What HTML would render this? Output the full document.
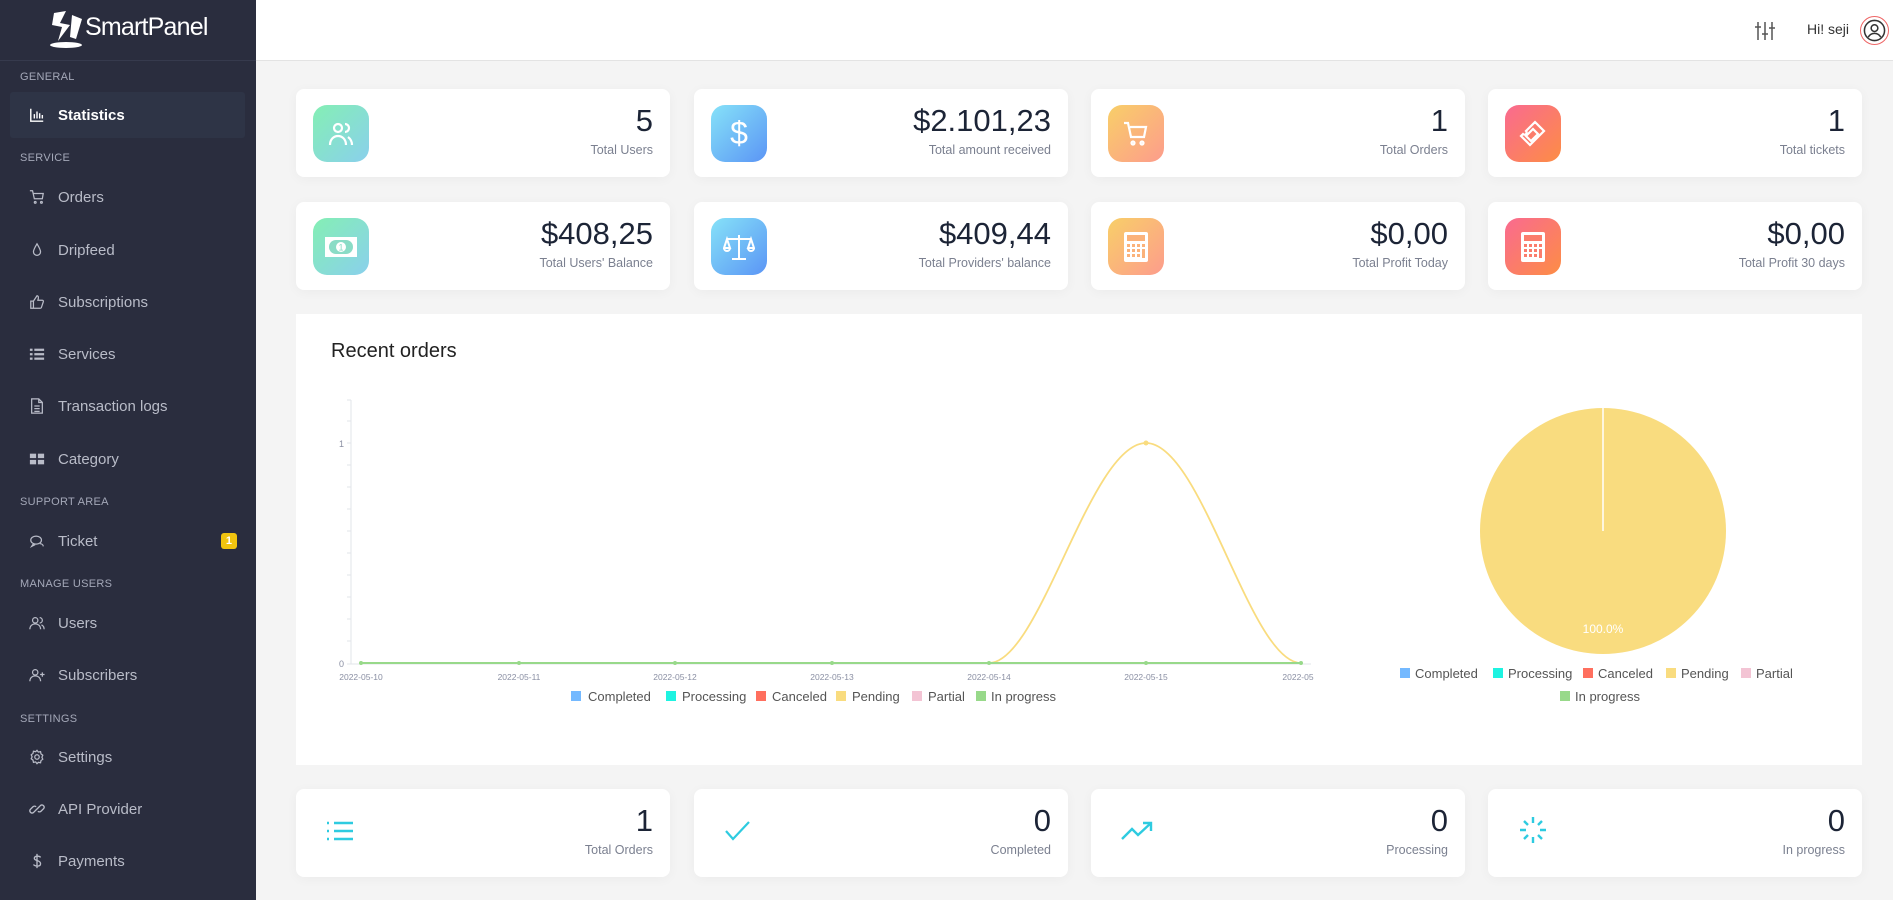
<!DOCTYPE html>
<html><head><meta charset="utf-8"><style>
*{box-sizing:border-box;margin:0;padding:0}
body{width:1893px;height:900px;overflow:hidden;background:#f4f4f4;font-family:"Liberation Sans",sans-serif;position:relative}
.sb{position:absolute;left:0;top:0;width:256px;height:900px;background:#2a2d3e}
.logo{position:absolute;left:0;top:0;width:256px;height:61px;border-bottom:1px solid #363a4d}
.sec{position:absolute;left:20px;font-size:11px;color:#a4a8b8;letter-spacing:.3px}
.it{position:absolute;left:10px;width:235px;height:46px;display:flex;align-items:center;padding-left:19px;color:#b9bcc8;font-size:15px}
.it svg{width:16px;height:16px;margin-right:13px;flex:none}
.it.act{background:#2e3446;color:#fff;font-weight:bold;border-radius:3px}
.hd{position:absolute;left:256px;top:0;width:1637px;height:61px;background:#fff;border-bottom:1px solid #e3e3e3}
.card{position:absolute;background:#fff;border-radius:8px;box-shadow:0 2px 12px rgba(0,0,0,.04)}
.ic{position:absolute;left:17px;top:16px;width:56px;height:57px;border-radius:14px;display:flex;align-items:center;justify-content:center}
.num{position:absolute;right:17px;top:14px;font-size:31px;color:#1c2436}
.lab{position:absolute;right:17px;top:54px;font-size:12.5px;color:#7b8090}
.g1{background:linear-gradient(135deg,#84efb4,#8ad0ec)}
.g2{background:linear-gradient(135deg,#86e2f8,#5b95f5)}
.g3{background:linear-gradient(135deg,#f8cf68,#fd9c8c)}
.g4{background:linear-gradient(135deg,#f96a90,#fd8d45)}
</style></head><body>
<div class="sb">
 <div class="logo">
  <svg style="position:absolute;left:46px;top:9px" width="42" height="40" viewBox="0 0 42 40"><path d="M8 4 L20 2 L14 14 L24 16 L12 32 L16 18 L6 16 Z" fill="#fff"/><path d="M26 6 L36 10 L30 30 L24 28 Z" fill="#fff"/><ellipse cx="20" cy="36" rx="16" ry="3" fill="#fff"/></svg>
  <div style="position:absolute;left:85px;top:13px;font-size:25px;color:#fff;letter-spacing:-0.8px">SmartPanel</div>
 </div>
 <div class="sec" style="top:71px">GENERAL</div>
 <div class="it act" style="top:92px"><svg viewBox="0 0 18 18" fill="none" stroke="#fff" stroke-width="1.6"><path d="M2 2v14h14M6 13V8M9 13V5M12 13V7M15 13V9"/></svg>Statistics</div>
 <div class="sec" style="top:152px">SERVICE</div>
 <div class="it" style="top:174px"><svg viewBox="0 0 18 18" fill="none" stroke="#b9bcc8" stroke-width="1.4"><path d="M1 2h3l2 9h9l1-6H5"/><circle cx="7" cy="15" r="1"/><circle cx="14" cy="15" r="1"/></svg>Orders</div>
 <div class="it" style="top:227px"><svg viewBox="0 0 18 18" fill="none" stroke="#b9bcc8" stroke-width="1.4"><path d="M9 2C6 7 5 9 5 11a4 4 0 008 0c0-2-1-4-4-9z"/></svg>Dripfeed</div>
 <div class="it" style="top:279px"><svg viewBox="0 0 18 18" fill="none" stroke="#b9bcc8" stroke-width="1.4"><path d="M2 8h3v8H2zM5 8l4-6c1 0 2 1 1.5 3L10 7h5c1 0 1.5 1 1 2l-2 6c0 .5-1 1-1.5 1H5"/></svg>Subscriptions</div>
 <div class="it" style="top:331px"><svg viewBox="0 0 18 18" fill="#b9bcc8"><rect x="1" y="3" width="3" height="2.5"/><rect x="6" y="3" width="11" height="2.5"/><rect x="1" y="8" width="3" height="2.5"/><rect x="6" y="8" width="11" height="2.5"/><rect x="1" y="13" width="3" height="2.5"/><rect x="6" y="13" width="11" height="2.5"/></svg>Services</div>
 <div class="it" style="top:383px"><svg viewBox="0 0 18 18" fill="none" stroke="#b9bcc8" stroke-width="1.4"><path d="M3 1h8l4 4v12H3zM11 1v4h4M6 9h6M6 12h6M6 15h6"/></svg>Transaction logs</div>
 <div class="it" style="top:436px"><svg viewBox="0 0 18 18" fill="#b9bcc8"><rect x="1" y="3" width="7" height="5"/><rect x="10" y="3" width="7" height="5"/><rect x="1" y="10" width="7" height="5"/><rect x="10" y="10" width="7" height="5"/></svg>Category</div>
 <div class="sec" style="top:496px">SUPPORT AREA</div>
 <div class="it" style="top:518px"><svg viewBox="0 0 18 18" fill="none" stroke="#b9bcc8" stroke-width="1.4"><ellipse cx="8" cy="8" rx="6" ry="4.5"/><path d="M5 12l-2 3 4-2M12 12c2 0 4 1 4 3"/></svg>Ticket<span style="position:absolute;right:8px;background:#f1c40f;color:#fff;font-size:11px;font-weight:bold;border-radius:3px;padding:2px 5px">1</span></div>
 <div class="sec" style="top:578px">MANAGE USERS</div>
 <div class="it" style="top:600px"><svg viewBox="0 0 18 18" fill="none" stroke="#b9bcc8" stroke-width="1.4"><circle cx="7" cy="6" r="3"/><path d="M1 16c0-4 3-6 6-6s6 2 6 6M12 3a3 3 0 010 6M14 11c2 1 3 3 3 5"/></svg>Users</div>
 <div class="it" style="top:652px"><svg viewBox="0 0 18 18" fill="none" stroke="#b9bcc8" stroke-width="1.4"><circle cx="7" cy="6" r="3"/><path d="M1 16c0-4 3-6 6-6s6 2 6 6M15 6v5M12.5 8.5h5"/></svg>Subscribers</div>
 <div class="sec" style="top:713px">SETTINGS</div>
 <div class="it" style="top:734px"><svg viewBox="0 0 18 18" fill="none" stroke="#b9bcc8" stroke-width="1.4"><circle cx="9" cy="9" r="2.5"/><path d="M9 1.5l1.5 2 2.5-.5.5 2.5 2 1.5-1 2.3 1 2.2-2 1.5-.5 2.5-2.5-.5L9 16.5 7.5 14.5l-2.5.5-.5-2.5-2-1.5 1-2.2-1-2.3 2-1.5.5-2.5 2.5.5z"/></svg>Settings</div>
 <div class="it" style="top:786px"><svg viewBox="0 0 18 18" fill="none" stroke="#b9bcc8" stroke-width="1.5"><path d="M8 10l-3 3a2.5 2.5 0 01-3.5-3.5l3-3a2.5 2.5 0 013.5 0M10 8l3-3a2.5 2.5 0 013.5 3.5l-3 3a2.5 2.5 0 01-3.5 0M7 11l4-4"/></svg>API Provider</div>
 <div class="it" style="top:838px"><svg viewBox="0 0 18 18" fill="none" stroke="#b9bcc8" stroke-width="1.5"><path d="M9 1v16M13 5c-1-2-7-2-7 1s7 2 7 6-6 3-8 1"/></svg>Payments</div>
</div>
<div class="hd">
 <svg style="position:absolute;left:1498px;top:20px" width="22" height="22" viewBox="0 0 22 22" fill="none" stroke="#555" stroke-width="1.5"><path d="M4 2v18M11 2v18M18 2v18M1 7h6M8 14h6M15 8h6"/></svg>
 <div style="position:absolute;left:1551px;top:21px;font-size:14px;color:#333">Hi! seji</div>
 <div style="position:absolute;left:1604px;top:16px;width:29px;height:29px;border-radius:50%;border:1px solid #e66;display:flex;align-items:center;justify-content:center"><svg width="23" height="23" viewBox="0 0 24 24" fill="none" stroke="#333" stroke-width="1.6"><circle cx="12" cy="12" r="10.5"/><circle cx="12" cy="9.5" r="3.5"/><path d="M5.5 19c1.5-3 4-4 6.5-4s5 1 6.5 4"/></svg></div>
</div>

<!-- row 1 -->
<div class="card" style="left:296px;top:89px;width:374px;height:88px"><div class="ic g1"><svg width="30" height="30" viewBox="0 0 30 30" fill="none" stroke="#fff" stroke-width="2.2"><circle cx="12" cy="9" r="4"/><path d="M4 26c0-6 4-9 8-9s8 3 8 9M19 5a4 4 0 010 8M22 18c2 1.5 4 4 4 8"/></svg></div><div class="num">5</div><div class="lab">Total Users</div></div>
<div class="card" style="left:694px;top:89px;width:374px;height:88px"><div class="ic g2"><span style="color:#fff;font-size:32px">$</span></div><div class="num">$2.101,23</div><div class="lab">Total amount received</div></div>
<div class="card" style="left:1091px;top:89px;width:374px;height:88px"><div class="ic g3"><svg width="30" height="30" viewBox="0 0 30 30" fill="none" stroke="#fff" stroke-width="2.2"><path d="M3 4h4l3 14h13l2-10H9"/><circle cx="12" cy="24" r="1.5"/><circle cx="21" cy="24" r="1.5"/></svg></div><div class="num">1</div><div class="lab">Total Orders</div></div>
<div class="card" style="left:1488px;top:89px;width:374px;height:88px"><div class="ic g4"><svg width="30" height="30" viewBox="0 0 30 30" fill="none" stroke="#fff" stroke-width="2.2"><path d="M17 3l9 9-14 14-9-9 2-2a2 2 0 003-3z"/><path d="M15 10l5 5-7 7-5-5z"/></svg></div><div class="num">1</div><div class="lab">Total tickets</div></div>
<!-- row 2 -->
<div class="card" style="left:296px;top:202px;width:374px;height:88px"><div class="ic g1"><svg width="34" height="24" viewBox="0 0 34 24"><rect x="1" y="2" width="32" height="20" fill="#fff"/><rect x="5" y="5" width="24" height="14" rx="7" fill="#8adcc6"/><circle cx="17" cy="12" r="5" fill="#fff"/><text x="17" y="15.5" font-size="9" text-anchor="middle" fill="#8adcc6" font-family="Liberation Sans">1</text></svg></div><div class="num">$408,25</div><div class="lab">Total Users' Balance</div></div>
<div class="card" style="left:694px;top:202px;width:374px;height:88px"><div class="ic g2"><svg width="32" height="30" viewBox="0 0 32 30" fill="none" stroke="#fff" stroke-width="2"><path d="M16 3v23M9 27h14M4 7h24M4 7l-3 9h6zM28 7l-3 9h6zM1 16a3 3 0 006 0M25 16a3 3 0 006 0"/></svg></div><div class="num">$409,44</div><div class="lab">Total Providers' balance</div></div>
<div class="card" style="left:1091px;top:202px;width:374px;height:88px"><div class="ic g3"><svg width="26" height="32" viewBox="0 0 26 32"><rect x="1" y="1" width="24" height="30" rx="2" fill="#fff"/><rect x="4" y="4" width="18" height="6" fill="#fbb27a"/><g fill="#fbb27a"><rect x="4" y="13" width="3" height="3"/><rect x="9" y="13" width="3" height="3"/><rect x="14" y="13" width="3" height="3"/><rect x="19" y="13" width="3" height="3"/><rect x="4" y="18" width="3" height="3"/><rect x="9" y="18" width="3" height="3"/><rect x="14" y="18" width="3" height="3"/><rect x="19" y="18" width="3" height="9"/><rect x="4" y="23" width="3" height="3"/><rect x="9" y="23" width="3" height="3"/><rect x="14" y="23" width="3" height="3"/></g></svg></div><div class="num">$0,00</div><div class="lab">Total Profit Today</div></div>
<div class="card" style="left:1488px;top:202px;width:374px;height:88px"><div class="ic g4"><svg width="26" height="32" viewBox="0 0 26 32"><rect x="1" y="1" width="24" height="30" rx="2" fill="#fff"/><rect x="4" y="4" width="18" height="6" fill="#fb7d6c"/><g fill="#fb7d6c"><rect x="4" y="13" width="3" height="3"/><rect x="9" y="13" width="3" height="3"/><rect x="14" y="13" width="3" height="3"/><rect x="19" y="13" width="3" height="3"/><rect x="4" y="18" width="3" height="3"/><rect x="9" y="18" width="3" height="3"/><rect x="14" y="18" width="3" height="3"/><rect x="19" y="18" width="3" height="9"/><rect x="4" y="23" width="3" height="3"/><rect x="9" y="23" width="3" height="3"/><rect x="14" y="23" width="3" height="3"/></g></svg></div><div class="num">$0,00</div><div class="lab">Total Profit 30 days</div></div>

<!-- chart panel -->
<div style="position:absolute;left:296px;top:314px;width:1566px;height:451px;background:#fff"></div>
<div style="position:absolute;left:331px;top:340px;font-size:20px;color:#222">Recent orders</div>
<svg style="position:absolute;left:0;top:0" width="1893" height="900" font-family="Liberation Sans">
 <g stroke="#e2e4ea" stroke-width="1">
  <line x1="351" y1="400" x2="351" y2="664"/><line x1="347" y1="664" x2="1311" y2="664"/>
  <line x1="347" y1="400" x2="351" y2="400"/><line x1="347" y1="421" x2="351" y2="421"/><line x1="347" y1="443" x2="351" y2="443"/><line x1="347" y1="465" x2="351" y2="465"/><line x1="347" y1="487" x2="351" y2="487"/><line x1="347" y1="509" x2="351" y2="509"/><line x1="347" y1="531" x2="351" y2="531"/><line x1="347" y1="553" x2="351" y2="553"/><line x1="347" y1="575" x2="351" y2="575"/><line x1="347" y1="597" x2="351" y2="597"/><line x1="347" y1="619" x2="351" y2="619"/><line x1="347" y1="641" x2="351" y2="641"/>
 </g>
 <text x="344" y="447" font-size="9" fill="#8a8fa3" text-anchor="end">1</text>
 <text x="344" y="667" font-size="9" fill="#8a8fa3" text-anchor="end">0</text>
 <g font-size="8.5" fill="#8a8fa3" text-anchor="middle"><text x="361" y="680">2022-05-10</text><text x="519" y="680">2022-05-11</text><text x="675" y="680">2022-05-12</text><text x="832" y="680">2022-05-13</text><text x="989" y="680">2022-05-14</text><text x="1146" y="680">2022-05-15</text><text x="1298" y="680">2022-05</text></g>
 <path d="M989 663 C1040 663 1090 443 1146 443 C1202 443 1250 663 1301 663" fill="none" stroke="#f9dc7f" stroke-width="1.8"/>
 <line x1="361" y1="663" x2="1301" y2="663" stroke="#98d98a" stroke-width="2"/>
 <g fill="#98d98a"><circle cx="361" cy="663" r="2"/><circle cx="519" cy="663" r="2"/><circle cx="675" cy="663" r="2"/><circle cx="832" cy="663" r="2"/><circle cx="989" cy="663" r="2"/><circle cx="1146" cy="663" r="2"/><circle cx="1301" cy="663" r="2"/></g>
 <circle cx="1146" cy="443" r="2.5" fill="#f9dc7f"/>
 <g font-size="13" fill="#555">
  <rect x="571" y="691" width="10" height="10" fill="#74b9ff"/><text x="588" y="701">Completed</text>
  <rect x="666" y="691" width="10" height="10" fill="#1ef3e1"/><text x="682" y="701">Processing</text>
  <rect x="756" y="691" width="10" height="10" fill="#ff6f5e"/><text x="772" y="701">Canceled</text>
  <rect x="836" y="691" width="10" height="10" fill="#f9dc7f"/><text x="852" y="701">Pending</text>
  <rect x="912" y="691" width="10" height="10" fill="#f3c4d4"/><text x="928" y="701">Partial</text>
  <rect x="976" y="691" width="10" height="10" fill="#98d98a"/><text x="991" y="701">In progress</text>
 </g>
 <circle cx="1603" cy="531" r="123" fill="#f9dc7f"/>
 <line x1="1603" y1="408" x2="1603" y2="531" stroke="#fff" stroke-width="1.5"/>
 <text x="1603" y="633" font-size="12" fill="#fff" text-anchor="middle">100.0%</text>
 <g font-size="13" fill="#555">
  <rect x="1400" y="668" width="10" height="10" fill="#74b9ff"/><text x="1415" y="678">Completed</text>
  <rect x="1493" y="668" width="10" height="10" fill="#1ef3e1"/><text x="1508" y="678">Processing</text>
  <rect x="1583" y="668" width="10" height="10" fill="#ff6f5e"/><text x="1598" y="678">Canceled</text>
  <rect x="1666" y="668" width="10" height="10" fill="#f9dc7f"/><text x="1681" y="678">Pending</text>
  <rect x="1741" y="668" width="10" height="10" fill="#f3c4d4"/><text x="1756" y="678">Partial</text>
  <rect x="1560" y="691" width="10" height="10" fill="#98d98a"/><text x="1575" y="701">In progress</text>
 </g>
</svg>

<!-- bottom row -->
<div class="card" style="left:296px;top:789px;width:374px;height:88px"><svg style="position:absolute;left:30px;top:30px" width="28" height="24" viewBox="0 0 28 24" stroke="#2ecbe0" stroke-width="2.4"><path d="M1 4h2M1 12h2M1 20h2M8 4h19M8 12h19M8 20h19"/></svg><div class="num">1</div><div class="lab">Total Orders</div></div>
<div class="card" style="left:694px;top:789px;width:374px;height:88px"><svg style="position:absolute;left:30px;top:30px" width="28" height="24" viewBox="0 0 28 24" fill="none" stroke="#2ecbe0" stroke-width="2.2"><path d="M2 12l7 8L25 3"/></svg><div class="num">0</div><div class="lab">Completed</div></div>
<div class="card" style="left:1091px;top:789px;width:374px;height:88px"><svg style="position:absolute;left:30px;top:30px" width="32" height="24" viewBox="0 0 32 24" fill="none" stroke="#2ecbe0" stroke-width="2.4"><path d="M1 20l10-10 6 6L30 4M22 4h8v8"/></svg><div class="num">0</div><div class="lab">Processing</div></div>
<div class="card" style="left:1488px;top:789px;width:374px;height:88px"><svg style="position:absolute;left:30px;top:26px" width="30" height="30" viewBox="0 0 30 30" stroke="#2ecbe0" stroke-width="2.4"><path d="M15 2v6M15 22v6M2 15h6M22 15h6M6 6l4 4M20 20l4 4M6 24l4-4M20 10l4-4"/></svg><div class="num">0</div><div class="lab">In progress</div></div>
</body></html>
